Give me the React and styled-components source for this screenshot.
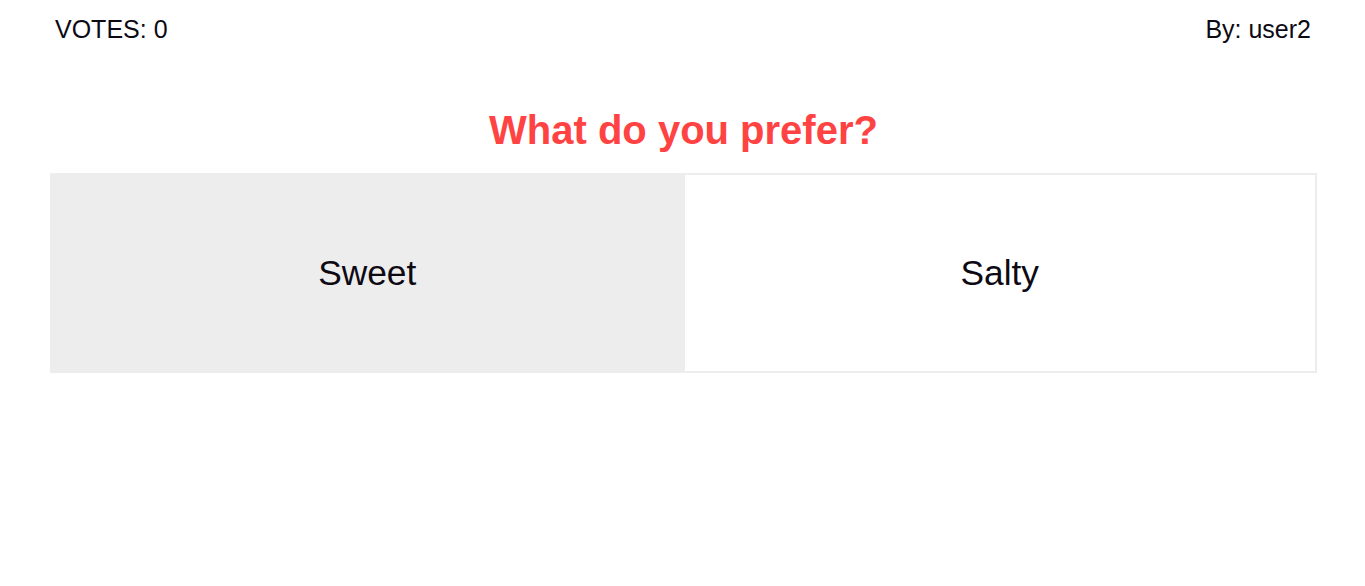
import React, { useState } from 'react';
import styled, { createGlobalStyle } from 'styled-components';

const GlobalStyle = createGlobalStyle`
  html, body {
    margin: 0;
    padding: 0;
    background: #fff;
    font-family: 'Liberation Sans', Arial, sans-serif;
    color: #0d0a14;
  }
`;

const Page = styled.div`
  padding: 0 48px 0 50px;
`;

const Header = styled.div`
  display: flex;
  justify-content: space-between;
  align-items: center;
  padding: 15px 6px 0 5px;
  font-size: 25px;
  line-height: 28px;
`;

const Title = styled.h1`
  margin: 64px 0 20px;
  text-align: center;
  font-size: 40px;
  line-height: 46px;
  font-weight: 700;
  color: #ff4343;
`;

const Options = styled.div`
  display: flex;
  height: 200px;
`;

const Option = styled.div`
  flex: 1 1 0;
  display: flex;
  align-items: center;
  justify-content: center;
  border: 2px solid #ededed;
  border-left-width: ${(p) => (p.first ? '2px' : '0')};
  background: ${(p) => (p.selected ? '#ededed' : '#fff')};
  font-size: 35.3px;
  cursor: pointer;
`;

export default function App() {
  const [selected, setSelected] = useState('sweet');
  const options = [
    { key: 'sweet', label: 'Sweet' },
    { key: 'salty', label: 'Salty' },
  ];

  return (
    <Page>
      <GlobalStyle />
      <Header>
        <span>VOTES: 0</span>
        <span>By: user2</span>
      </Header>
      <Title>What do you prefer?</Title>
      <Options>
        {options.map((o, i) => (
          <Option
            key={o.key}
            first={i === 0}
            selected={selected === o.key}
            onClick={() => setSelected(o.key)}>
            {o.label}
          </Option>
        ))}
      </Options>
    </Page>
  );
}
